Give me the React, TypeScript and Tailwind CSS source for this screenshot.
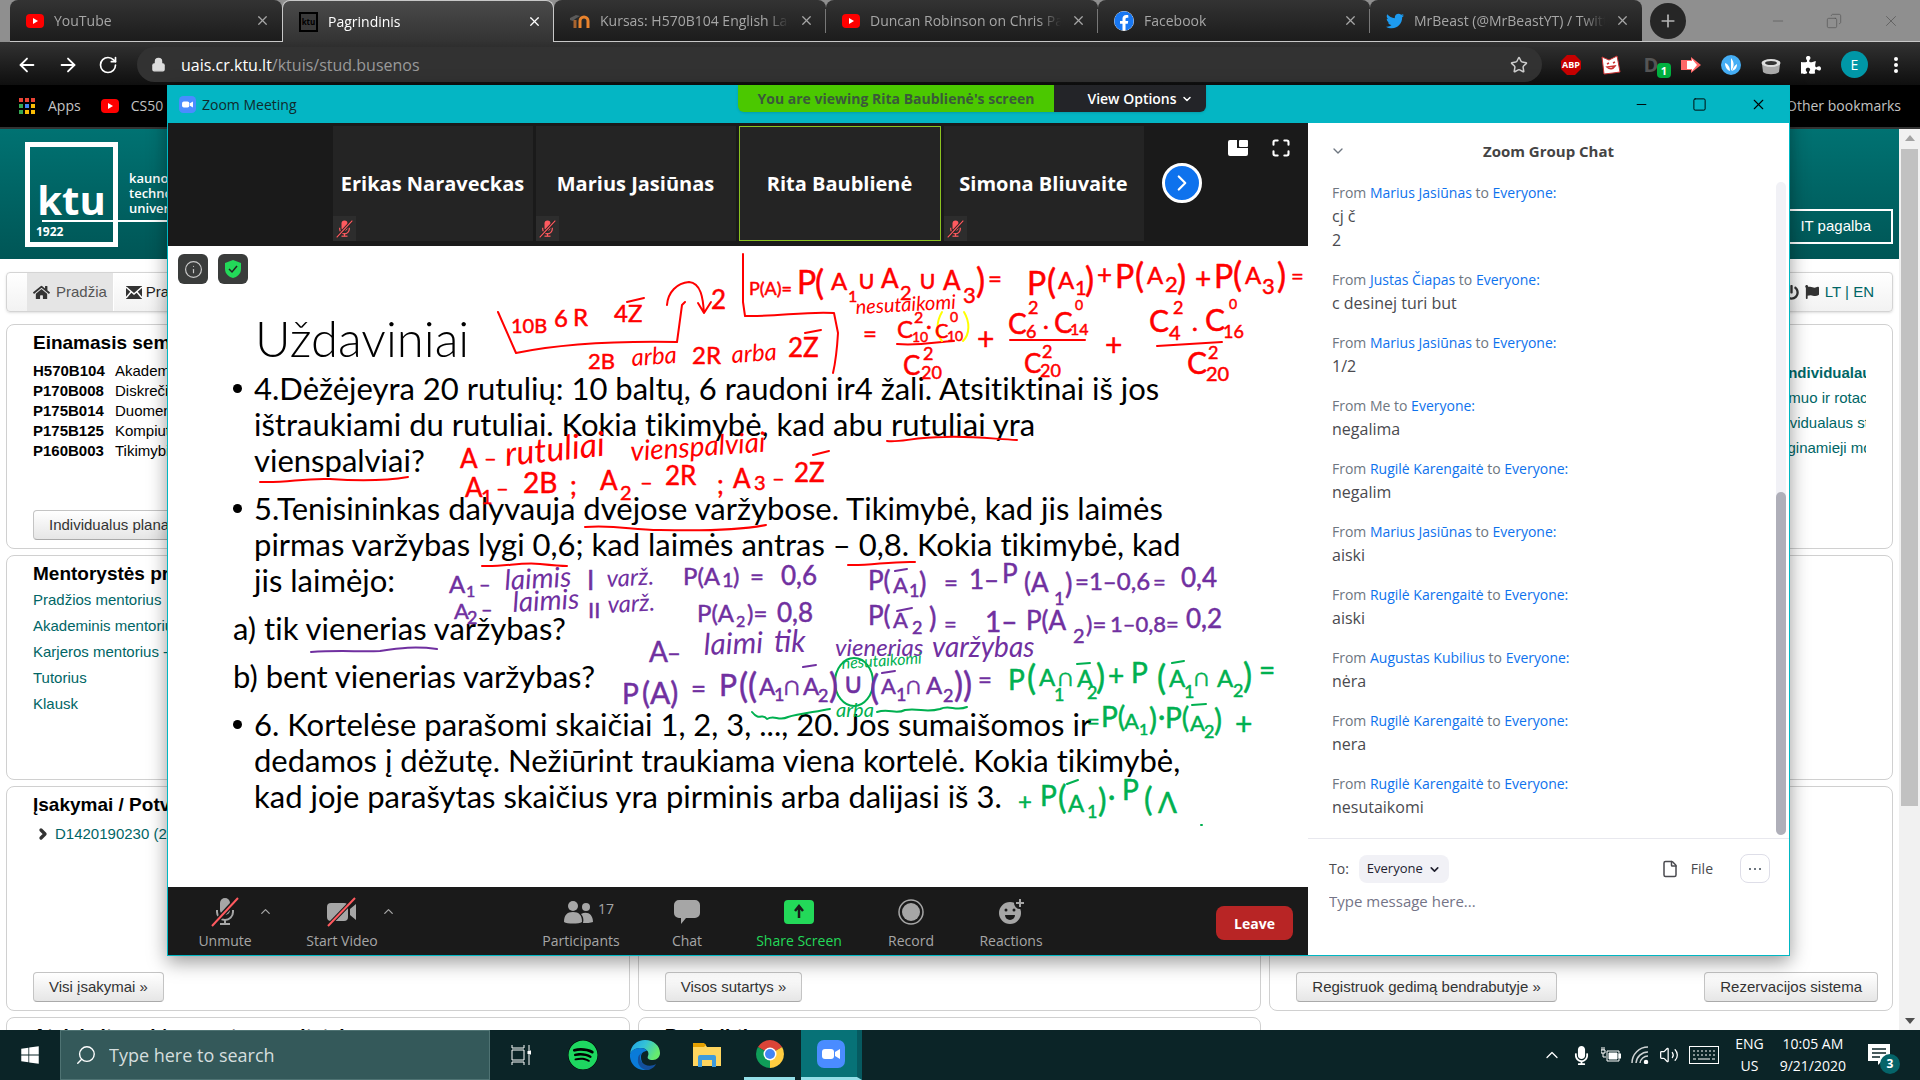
import type { ReactNode } from "react";
import {
  ArrowLeft,
  ArrowRight,
  RotateCw,
  Lock,
  Star,
  Plus,
  Minus,
  X,
  Copy,
  Square,
  ChevronDown,
  ChevronUp,
  ChevronRight,
  Info,
  Maximize,
  File,
  Search,
  Volume2,
} from "lucide-react";
import {
  FaHome,
  FaFlag,
  FaSpotify,
  FaTwitter,
  FaFacebook,
  FaPuzzlePiece,
  FaWindows,
  FaPowerOff,
  FaMicrophone,
} from "react-icons/fa";

const UI = "font-['Open_Sans','Noto_Sans',sans-serif]";
const WEB = "font-['Liberation_Sans',Arial,sans-serif]";

/* ---------- small icons ---------- */

function YouTubeIcon() {
  return (
    <svg viewBox="0 0 18 14" className="h-[14px] w-[18px] shrink-0">
      <rect width="18" height="14" rx="4" fill="#f00" />
      <path d="M7 4l5 3-5 3z" fill="#fff" />
    </svg>
  );
}

function MoodleIcon() {
  return (
    <svg viewBox="0 0 20 14" className="h-[14px] w-[20px] shrink-0">
      <path d="M0 4l6-3 4 1-5 3-2 2-3-1z" fill="#5a5a5a" />
      <path d="M5 6v8" stroke="#a8642f" strokeWidth="3" />
      <path d="M10 14V7a4 4 0 0 1 8 0v7" fill="none" stroke="#e9832d" strokeWidth="3" />
    </svg>
  );
}

function KtuIcon() {
  return (
    <span className="flex h-[20px] w-[19px] shrink-0 items-center justify-center border-2 border-black bg-[#3a3a3a] text-[8px] font-bold text-black">
      ktu
    </span>
  );
}

function ZoomIcon({ size }: { size: "s" | "l" }) {
  return (
    <svg viewBox="0 0 28 28" className={size === "s" ? "size-[17px] shrink-0" : "size-[28px] shrink-0"}>
      <rect width="28" height="28" rx="7" fill="#4a8cff" />
      <rect x="5" y="9" width="12" height="10" rx="3" fill="#fff" />
      <path d="M18 12l5-3v10l-5-3z" fill="#fff" />
    </svg>
  );
}

function MutedMic({ small = false }: { small?: boolean }) {
  return (
    <svg viewBox="0 0 28 30" className={small ? "h-[18px] w-[17px]" : "h-[30px] w-[28px]"}>
      <g fill={small ? "#ff5a5f" : "#a6a6a6"} stroke="none">
        <rect x="9" y="1" width="10" height="17" rx="5" />
        <rect x="9" y="26" width="10" height="2" />
        <rect x="13" y="22" width="2" height="5" />
      </g>
      <path d="M6 13v2a8 8 0 0 0 16 0v-2" fill="none" stroke={small ? "#ff5a5f" : "#a6a6a6"} strokeWidth="2" />
      <path d="M1 29L27 1" stroke={small ? "#242424" : "#1a1a1a"} strokeWidth="5" />
      <path d="M1 29L27 1" stroke="#ff5a5f" strokeWidth="2" />
    </svg>
  );
}

function MutedCamera() {
  return (
    <svg viewBox="0 0 34 30" className="h-[30px] w-[34px]">
      <rect x="2" y="6" width="21" height="18" rx="4" fill="#a6a6a6" />
      <path d="M25 12l6-5v16l-6-5z" fill="#a6a6a6" />
      <path d="M3 29L30 1" stroke="#1a1a1a" strokeWidth="4" />
      <path d="M3 29L30 1" stroke="#ff5a5f" strokeWidth="2" />
    </svg>
  );
}

/* ---------- browser ---------- */

type TabInfo = { icon: ReactNode; title: string; active?: boolean; sep?: boolean };

const tabs: TabInfo[] = [
  { icon: <YouTubeIcon />, title: "YouTube" },
  { icon: <KtuIcon />, title: "Pagrindinis", active: true },
  { icon: <MoodleIcon />, title: "Kursas: H570B104 English Language", sep: true },
  { icon: <YouTubeIcon />, title: "Duncan Robinson on Chris Paul", sep: true },
  { icon: <FaFacebook className="size-[20px] shrink-0 rounded-full bg-white text-[#1877f2]" />, title: "Facebook", sep: true },
  { icon: <FaTwitter className="size-[18px] shrink-0 text-[#1d9bf0]" />, title: "MrBeast (@MrBeastYT) / Twitter" },
];

function Tab({ icon, title, active, sep }: TabInfo) {
  return (
    <div
      className={
        active
          ? "flex w-[272px] items-center gap-2.5 rounded-t-lg border border-b-0 border-[#c8c8c8] bg-gradient-to-b from-[#4a4a4a] to-[#333] pl-4 pr-[11px] text-white"
          : "flex w-[272px] items-center gap-2.5 rounded-t-lg border-b border-[#c8c8c8] bg-gradient-to-b from-[#333] to-[#1c1c1c] pl-4 text-[#a6a6a6]"
      }
    >
      {icon}
      <span className="min-w-0 flex-1 overflow-hidden whitespace-nowrap text-sm [mask-image:linear-gradient(to_right,#000_88%,transparent)]">
        {title}
      </span>
      <div className={active ? "flex items-center" : "flex w-[27px] items-center justify-between"}>
        <button aria-label={`Close ${title}`}>
          <X className="size-[15px]" />
        </button>
        {sep && <span className="h-[24px] w-px bg-[#777]" />}
      </div>
    </div>
  );
}

function Browser() {
  return (
    <header className={`${UI} flex flex-col`}>
      <div className="flex h-[42px] bg-[#8f8f8f] pl-2.5">
        {tabs.map((t) => (
          <Tab key={t.title} {...t} />
        ))}
        <div className="flex flex-1 items-center border-b border-[#c8c8c8] pl-2">
          <button aria-label="New tab" className="flex size-[36px] items-center justify-center rounded-full bg-[#262626] text-[#b5b5b5]">
            <Plus className="size-[20px]" />
          </button>
          <div className="ml-auto flex items-center gap-10 pr-5 text-[#555]">
            <Minus className="size-[16px]" strokeWidth={1} />
            <Copy className="size-[16px] -scale-x-100" strokeWidth={1} />
            <X className="size-[18px]" strokeWidth={1} />
          </div>
        </div>
      </div>
      <div className="flex h-[43px] items-center gap-[19px] bg-gradient-to-b from-[#323232] to-[#0f0f0f] pl-4 pr-4 pt-0.5 text-white">
        <button aria-label="Back">
          <ArrowLeft className="size-[22px]" />
        </button>
        <button aria-label="Forward">
          <ArrowRight className="size-[22px]" />
        </button>
        <button aria-label="Reload">
          <RotateCw className="size-[20px]" />
        </button>
        <div className="flex h-[35px] flex-1 items-center gap-[15px] rounded-full bg-[#323232] px-3.5">
          <Lock className="size-[15px] fill-[#ddd] text-[#ddd]" />
          <p className="flex-1 text-[16px] text-[#9a9a9a]">
            <span className="text-white">uais.cr.ktu.lt</span>/ktuis/stud.busenos
          </p>
          <Star className="size-[18px] text-[#ccc]" />
        </div>
        <div className="flex items-center gap-5">
          <svg viewBox="0 0 20 20" className="size-[20px]">
            <path d="M6 0h8l6 6v8l-6 6H6l-6-6V6z" fill="#c70000" />
            <text x="10" y="13" textAnchor="middle" fontSize="9" fontWeight="700" fill="#fff">
              ABP
            </text>
          </svg>
          <svg viewBox="0 0 20 20" className="size-[20px]">
            <path d="M1 2l7 3 8-4 1 5 2 11-7 1-9 1z" fill="#fff" stroke="#c33" />
            <path d="M6 9l2-1M12 8l2-1M6 12c3 3 6 2 8-1z" fill="none" stroke="#c33" strokeWidth="1.5" />
          </svg>
          <span className="relative flex size-[20px] items-center justify-center text-[20px] font-bold text-[#555]">
            D
            <span className="absolute -right-2.5 top-2 rounded-sm bg-[#00b140] px-1 text-[11px] leading-[15px] text-white">1</span>
          </span>
          <svg viewBox="0 0 20 20" className="size-[20px]">
            <path d="M0 5h10V2l10 8-10 8v-3H0z" fill="#f66" />
            <path d="M6 6h5V4l5 6-5 6v-2H6z" fill="#fff" />
          </svg>
          <svg viewBox="0 0 20 20" className="size-[20px]">
            <circle cx="10" cy="10" r="10" fill="#45aef5" />
            <path d="M4 8c3 1 5 4 5 8-3-1-5-4-5-8zM10 16V3c4 5 3 9 0 13zM16 9c0 4-2 6-5 7 1-3 2-5 5-7z" fill="#fff" />
          </svg>
          <svg viewBox="0 0 20 20" className="size-[20px]">
            <path d="M1 9h18l-1 8c-3 3-13 3-16 0z" fill="#aaa" />
            <ellipse cx="10" cy="8" rx="9.5" ry="4" fill="#ddd" />
            <ellipse cx="10" cy="8" rx="6" ry="2" fill="#333" />
          </svg>
          <FaPuzzlePiece className="size-[20px]" />
          <span className="flex size-[27px] items-center justify-center rounded-full bg-[#0097a7] text-sm">E</span>
          <svg viewBox="0 0 16 20" className="h-[20px] w-[16px] fill-white">
            <circle cx="8" cy="4" r="2" />
            <circle cx="8" cy="10" r="2" />
            <circle cx="8" cy="16" r="2" />
          </svg>
        </div>
      </div>
      <div className="flex h-[44px] items-center border-b-2 border-[#333] bg-black px-[19px] text-sm text-[#c4c4c4]">
        <svg viewBox="0 0 17 17" className="size-[17px]">
          <path d="M0 0h4v4H0zM6 0h4v4H6zM12 0h4v4h-4z" fill="#ea4335" />
          <path d="M0 6h4v4H0zM0 12h4v4H0z" fill="#34a853" />
          <path d="M6 6h4v4H6z" fill="#4285f4" />
          <path d="M12 6h4v4h-4zM6 12h4v4H6zM12 12h4v4h-4z" fill="#fbbc05" />
        </svg>
        <a href="#apps" className="ml-3">
          Apps
        </a>
        <a href="#cs50" className="ml-5 flex items-center gap-3">
          <YouTubeIcon />
          CS50
        </a>
        <a href="#other" className="ml-auto">
          Other bookmarks
        </a>
      </div>
    </header>
  );
}

/* ---------- university page ---------- */

function Card({ children, flat = false }: { children?: ReactNode; flat?: boolean }) {
  return (
    <section
      className={
        flat
          ? "h-[40px] overflow-hidden rounded-lg border border-[#d0d0d0] bg-white pl-[26px] pt-1.5"
          : "flex min-h-[225px] flex-col rounded-lg border border-[#d0d0d0] bg-white px-[26px] pb-2 pt-1.5"
      }
    >
      {children}
    </section>
  );
}

function PageButton({ children }: { children: ReactNode }) {
  return (
    <button className="h-[30px] whitespace-nowrap rounded border border-[#c4c4c4] border-b-[#aaa] bg-gradient-to-b from-white to-[#e6e6e6] px-[15px] text-[15px] text-[#333]">
      {children}
    </button>
  );
}

const subjects = [
  ["H570B104", "Akademinė anglų kalba"],
  ["P170B008", "Diskrečiosios struktūros"],
  ["P175B014", "Duomenų struktūros"],
  ["P175B125", "Kompiuterių architektūra"],
  ["P160B003", "Tikimybių teorija"],
];

const mentorLinks = ["Pradžios mentorius", "Akademinis mentorius", "Karjeros mentorius -", "Tutorius", "Klausk"];

function Title({ children }: { children: ReactNode }) {
  return <h2 className="whitespace-nowrap text-[19px] font-bold leading-6 text-black">{children}</h2>;
}

function University() {
  return (
    <div className={`${WEB} flex min-h-0 flex-1 overflow-hidden bg-white`}>
      <main className="min-w-0 flex-1">
        <div className="flex h-[130px] items-start justify-between bg-gradient-to-b from-[#007272] to-[#005656] px-1.5 text-white">
          <div className="flex pl-[19px] pt-[13px]">
            <div className="flex h-[105px] w-[93px] flex-col justify-end border-[5px] border-white px-1.5 font-['Open_Sans',sans-serif] font-bold">
              <span className="text-center text-[40px] leading-[40px]">ktu</span>
              <span className="-mr-[60px] ml-1.5 border-b-2 border-white" />
              <span className="text-[12px] leading-5">1922</span>
            </div>
            <p className="ml-[11px] mt-[29px] font-['Open_Sans',sans-serif] text-[13px] font-semibold leading-[15px]">
              kauno
              <br />
              technologijos
              <br />
              universitetas
            </p>
          </div>
          <a href="#help" className="mt-[80px] flex h-[35px] w-[160px] items-center justify-end border-2 border-white pr-5 text-[15px]">
            IT pagalba
          </a>
        </div>
        <div className="flex flex-col gap-3 px-1.5 pt-[13px]">
          <nav className="flex h-[40px] items-stretch rounded border border-[#d4d4d4] bg-gradient-to-b from-white to-[#f2f2f2] pl-5 text-[15px] text-[#222] shadow-sm">
            <a href="#home" className="flex items-center gap-1.5 border-r border-white bg-[#e5e5e5] px-1.5 text-[#555]">
              <FaHome className="size-[17px] text-[#333]" />
              Pradžia
            </a>
            <a href="#messages" className="ml-3 flex items-center gap-1">
              <svg viewBox="0 0 16 13" className="h-[13px] w-[16px]">
                <path d="M0 0h16v13H0z" fill="#333" />
                <path d="M0 1l8 7 8-7M0 12l5-6M16 12l-5-6" fill="none" stroke="#fff" strokeWidth="1.5" />
              </svg>
              Pranešimai
            </a>
            <span className="ml-auto flex items-center gap-1.5 pr-[18px] text-[#006666]">
              <FaPowerOff className="size-[15px] text-[#333]" />
              <FaFlag className="size-[14px] text-[#333]" />
              <span>
                <a href="#lt">LT</a> | <a href="#en">EN</a>
              </span>
            </span>
          </nav>
          <div className="grid grid-cols-3 gap-x-2 gap-y-1.5">
            <Card>
              <Title>Einamasis semestras</Title>
              <table className="mt-1.5 text-[15px] leading-5">
                <tbody>
                  {subjects.map(([code, name]) => (
                    <tr key={code} className="text-black">
                      <th className="w-[82px] text-left font-bold">{code}</th>
                      <td>{name}</td>
                    </tr>
                  ))}
                </tbody>
              </table>
              <div className="mt-auto">
                <PageButton>Individualus planas</PageButton>
              </div>
            </Card>
            <Card />
            <Card>
              <div className="ml-auto mt-[29px] flex w-[180px] flex-col overflow-hidden whitespace-nowrap pl-[86px] text-[15px] leading-[25px] text-[#006666]">
                <a href="#n1" className="pl-3 font-bold">individualaus</a>
                <a href="#n2" className="pl-2">gmuo ir rotacija</a>
                <a href="#n3" className="pl-1.5">dividualaus studijų</a>
                <a href="#n4" className="pl-2">yginamieji moduliai</a>
              </div>
            </Card>
            <Card>
              <Title>Mentorystės programa</Title>
              <ul className="mt-px text-[15px] leading-[26px] text-[#006666]">
                {mentorLinks.map((l) => (
                  <li key={l}>
                    <a href="#mentor">{l}</a>
                  </li>
                ))}
              </ul>
            </Card>
            <Card />
            <Card />
            <Card>
              <Title>Įsakymai / Potvarkiai</Title>
              <a href="#order" className="mt-1.5 flex items-center gap-1 pl-0.5 text-[15px] text-[#006666]">
                <ChevronRight className="size-[16px] text-[#333]" strokeWidth={5} />
                D1420190230 (2020-09-01)
              </a>
              <div className="mt-auto">
                <PageButton>Visi įsakymai »</PageButton>
              </div>
            </Card>
            <Card>
              <div className="mt-auto">
                <PageButton>Visos sutartys »</PageButton>
              </div>
            </Card>
            <Card>
              <div className="-mr-3 mt-auto flex justify-between">
                <PageButton>Registruok gedimą bendrabutyje »</PageButton>
                <PageButton>Rezervacijos sistema</PageButton>
              </div>
            </Card>
            <Card flat>
              <Title>Atsiskaitymai / semestro rezultatai</Title>
            </Card>
            <Card flat>
              <Title>Paskelbti</Title>
            </Card>
          </div>
        </div>
      </main>
      <div className="flex w-[21px] flex-col items-center justify-between bg-[#f1f1f1] py-1.5">
        <span className="border-x-[5px] border-b-[6px] border-x-transparent border-b-[#a3a3a3]" />
        <span className="mb-auto mt-2 h-[657px] w-[17px] bg-[#c1c1c1]" />
        <span className="border-x-[5px] border-t-[6px] border-x-transparent border-t-[#505050]" />
      </div>
    </div>
  );
}

/* ---------- shared slide and ink ---------- */

type Note = [x: number, y: number, text: string, size: number, tilt?: number];

const redNotes: Note[] = [
  [511, 333, "10B", 20], [554, 327, "6", 24], [573, 326, "R", 24], [614, 322, "4Z", 24], [711, 309, "2", 26],
  [588, 369, "2B", 22], [692, 364, "2R", 24], [788, 357, "2Z", 26],
  [749, 295, "P(A)=", 18], [797, 294, "P", 32], [815, 295, "(", 34], [831, 290, "A", 24], [848, 302, "1", 16], [857, 289, "∪", 26],
  [881, 288, "A", 26], [900, 300, "2", 20], [918, 289, "∪", 26], [943, 290, "A", 26], [963, 303, "3", 22], [976, 293, ")", 34], [988, 287, "=", 24],
  [1027, 295, "P", 32], [1047, 294, "(", 34], [1058, 289, "A", 24], [1075, 295, "1", 20], [1085, 292, ")", 34], [1097, 284, "+", 26],
  [1115, 288, "P", 32], [1135, 288, "(", 34], [1147, 284, "A", 24], [1165, 292, "2", 22], [1177, 290, ")", 34], [1195, 289, "+", 28],
  [1214, 288, "P", 32], [1233, 287, "(", 34], [1245, 284, "A", 24], [1262, 294, "3", 22], [1277, 288, ")", 34], [1291, 284, "=", 22],
  [863, 342, "=", 24],
  [897, 338, "C", 24], [914, 323, "2", 16], [912, 342, "10", 14], [926, 334, "·", 22], [935, 338, "C", 20], [947, 341, "10", 14], [950, 322, "0", 14],
  [903, 375, "C", 26], [923, 360, "2", 18], [921, 379, "20", 18], [977, 350, "+", 30],
  [1008, 334, "C", 28], [1028, 314, "2", 18], [1026, 338, "6", 18], [1043, 334, "·", 22], [1054, 333, "C", 28], [1075, 310, "0", 14], [1070, 335, "14", 16],
  [1024, 373, "C", 26], [1042, 358, "2", 18], [1040, 377, "20", 18], [1105, 356, "+", 30],
  [1149, 332, "C", 30], [1173, 314, "2", 18], [1169, 340, "4", 20], [1192, 336, "·", 22], [1205, 331, "C", 30], [1229, 309, "0", 14], [1223, 338, "16", 18],
  [1187, 374, "C", 30], [1208, 359, "2", 18], [1206, 381, "20", 20],
  [460, 468, "A", 26], [484, 466, "–", 22], [465, 497, "A", 26], [481, 504, "1", 20], [496, 496, "–", 22], [523, 493, "2B", 28], [570, 495, ";", 26],
  [600, 490, "A", 26], [620, 500, "2", 20], [640, 490, "–", 22], [665, 485, "2R", 26], [717, 494, ";", 26], [733, 488, "A", 26], [754, 490, "3", 20], [772, 486, "–", 22], [794, 482, "2Z", 26],
];

const redScript: Note[] = [
  [632, 366, "arba", 24, -4], [732, 363, "arba", 24, -4], [856, 314, "nesutaikomi", 20, -3], [506, 466, "rutuliai", 34, -6], [631, 461, "vienspalviai", 28, -4],
];

const purpleNotes: Note[] = [
  [449, 593, "A", 24], [466, 597, "1", 16], [479, 591, "–", 20], [454, 619, "A", 22], [467, 624, "2", 18], [481, 616, "–", 20], [587, 590, "I", 26], [588, 618, "II", 22],
  [683, 585, "P(A", 24], [722, 587, "1", 20], [733, 585, ")", 24], [750, 585, "=", 24], [781, 585, "0,6", 26],
  [697, 622, "P(A", 24], [736, 627, "2", 16], [747, 622, ")=", 24], [777, 622, "0,8", 26],
  [868, 590, "P(", 26], [893, 593, "A", 22], [909, 597, "1", 18], [919, 593, ")", 28], [944, 591, "=", 24], [969, 589, "1–", 26], [1002, 583, "P", 26], [1024, 592, "(A", 26],
  [1054, 605, "1", 18], [1065, 594, ")", 28], [1075, 590, "=1–0,6", 24], [1153, 590, "=", 22], [1181, 587, "0,4", 26],
  [868, 625, "P(", 26], [893, 628, "A", 22], [912, 634, "2", 18], [929, 628, ")", 28], [944, 632, "=", 22], [985, 632, "1–", 28], [1026, 630, "P(A", 26],
  [1073, 643, "2", 20], [1086, 633, ")=", 24], [1110, 632, "1–0,8=", 22], [1186, 628, "0,2", 26],
  [649, 662, "A", 28], [667, 661, "–", 24],
  [622, 704, "P", 28], [642, 704, "(A)", 30], [691, 698, "=", 26], [719, 696, "P", 30], [739, 698, "((", 34], [759, 695, "A", 24], [774, 701, "1", 18], [784, 695, "∩", 26],
  [803, 695, "A", 24], [818, 702, "2", 18], [829, 698, ")", 34], [843, 693, "∪", 28], [870, 700, "(", 34], [881, 694, "A", 22], [896, 701, "1", 18], [906, 694, "∩", 24], [926, 694, "A", 24], [943, 702, "2", 18],
  [954, 697, "))", 34], [978, 688, "=", 24],
];

const purpleScript: Note[] = [
  [505, 590, "laimis", 28, -3], [607, 587, "varž.", 24, -3], [513, 612, "laimis", 28, -3], [608, 613, "varž.", 24, -3], [704, 655, "laimi", 30, -2], [774, 652, "tik", 30],
  [835, 656, "vienerias", 24], [932, 657, "varžybas", 28],
];

const greenNotes: Note[] = [
  [1008, 690, "P", 28], [1027, 690, "(", 34], [1039, 686, "A", 24], [1054, 701, "1", 18], [1058, 686, "∩", 24], [1077, 687, "A", 24], [1087, 699, "2", 18], [1096, 689, ")", 34], [1108, 686, "+", 28],
  [1131, 683, "P", 28], [1157, 690, "(", 34], [1169, 687, "A", 24], [1184, 698, "1", 18], [1194, 686, "∩", 24], [1217, 687, "A", 24], [1233, 697, "2", 18], [1243, 688, ")", 34], [1259, 680, "=", 28],
  [1087, 729, "=", 22], [1101, 727, "P(", 28], [1124, 729, "A", 22], [1139, 735, "1", 16], [1149, 730, ")", 30], [1158, 726, "·", 28], [1165, 728, "P(", 28], [1190, 731, "A", 22], [1204, 738, "2", 18], [1214, 731, ")", 30], [1235, 735, "+", 30],
  [1018, 810, "+", 24], [1040, 806, "P", 28], [1058, 809, "(", 32], [1068, 812, "A", 24], [1087, 818, "1", 18], [1098, 812, ")", 32], [1108, 806, "·", 28], [1122, 800, "P", 28], [1144, 811, "(", 32], [1158, 813, "Λ", 28],
];

const greenScript: Note[] = [
  [842, 669, "nesutaikomi", 16, -4], [836, 717, "arba", 20],
];

function Notes({ items, color, script = false }: { items: Note[]; color: string; script?: boolean }) {
  return (
    <g fill={color} className={script ? "font-['Lato',sans-serif] italic" : "font-['Lato',sans-serif]"}>
      {items.map(([x, y, text, size, tilt]) => (
        <text
          key={`${x}-${y}`}
          x={x}
          y={y}
          fontSize={size}
          stroke={color}
          strokeWidth={script ? 0 : 0.5}
          transform={tilt ? `rotate(${tilt} ${x} ${y})` : undefined}
        >
          {text}
        </text>
      ))}
    </g>
  );
}

function Ink() {
  return (
    <svg viewBox="168 246 1140 641" className="pointer-events-none absolute left-0 top-0 h-[641px] w-[1140px]" fill="none" strokeLinecap="round" strokeLinejoin="round">
      <g stroke="#ff0000" strokeWidth="2">
        <path d="M498 312L516 353C560 344 620 341 677 342L682 305L685 302" />
        <path d="M667 305C668 292 677 283 689 282C701 283 703 298 704 313M698 303L704 313L711 302" />
        <path d="M743 254L743 302L745 316C776 317 806 311 834 313L838 333C837 350 836 360 833 373" />
        <path d="M897 344C919 346 936 342 954 341M1010 340L1085 340M1157 346L1222 342" />
        <path d="M627 302L644 298M805 333L821 330M813 455L821 453L829 451" />
        <path d="M887 441C899 443 914 437 944 437C974 436 994 439 1017 440" />
        <path d="M260 482C290 483 300 478 330 479C360 481 390 480 408 477" />
        <path d="M585 527C620 525 630 530 660 530C700 531 740 530 766 525" />
        <path d="M482 566C505 567 520 562 540 564C550 565 560 566 567 566" />
        <path d="M848 565C870 566 890 561 915 562" />
      </g>
      <path d="M942 312C936 322 936 334 942 341M964 312C970 322 970 334 963 341" stroke="#ffff00" strokeWidth="2" />
      <g stroke="#7030a0" strokeWidth="2">
        <path d="M311 652C340 650 360 652 380 651C400 648 415 646 437 649" />
        <path d="M895 571L907 569M897 611L912 608M803 667L816 665M882 673L895 671" />
      </g>
      <g stroke="#00b050" strokeWidth="2">
        <ellipse cx="854" cy="682" rx="19" ry="24" />
        <path d="M752 712C760 722 762 712 767 719C775 714 778 722 788 717C798 714 815 712 830 709" />
        <path d="M877 712C890 708 895 715 905 710C920 708 925 713 940 709C950 704 955 712 967 707" />
        <path d="M1077 664L1090 663M1172 663L1184 661M1192 705L1206 704M1067 784L1078 780M1201 825h1" />
      </g>
      <Notes items={redNotes} color="#ff0000" />
      <Notes items={redScript} color="#ff0000" script />
      <Notes items={purpleNotes} color="#7030a0" />
      <Notes items={purpleScript} color="#7030a0" script />
      <Notes items={greenNotes} color="#00b050" />
      <Notes items={greenScript} color="#00b050" script />
    </svg>
  );
}

function Bullet({ lines }: { lines: string[] }) {
  return (
    <li className="flex gap-3">
      <span className="mt-[14px] size-[9px] shrink-0 rounded-full bg-black" />
      <p>
        {lines.map((l) => (
          <span key={l} className="block">
            {l}
          </span>
        ))}
      </p>
    </li>
  );
}

function Slide() {
  return (
    <div className="relative flex-1 overflow-hidden bg-white text-black">
      <div className="absolute left-[10px] top-[8px] flex gap-2.5">
        <button aria-label="Meeting information" className="flex size-[30px] items-center justify-center rounded-md bg-[#3a3c3b] text-[#c8c8c8]">
          <Info className="size-[19px]" strokeWidth={1.5} />
        </button>
        <button aria-label="Encryption" className="flex size-[30px] items-center justify-center rounded-md bg-[#3a3c3b]">
          <svg viewBox="0 0 16 18" className="h-[18px] w-[16px]">
            <path d="M8 0l8 3v6c0 5-4 8-8 9-4-1-8-4-8-9V3z" fill="#23d959" />
            <path d="M4 9l3 3 5-6" fill="none" stroke="#222" strokeWidth="1.5" />
          </svg>
        </button>
      </div>
      <div className="whitespace-nowrap pl-[65px] pt-[60px] font-['Lato',sans-serif] [font-variant-ligatures:none]">
        <h1 className="pl-[22px] text-[49px] font-light leading-[64px]">Uždaviniai</h1>
        <ul className="flex flex-col gap-3 text-[31px] leading-[36px]">
          <Bullet
            lines={[
              "4.Dėžėjeyra 20 rutulių: 10 baltų, 6 raudoni ir4 žali. Atsitiktinai iš jos",
              "ištraukiami du rutuliai. Kokia tikimybė, kad abu rutuliai yra",
              "vienspalviai?",
            ]}
          />
          <Bullet
            lines={[
              "5.Tenisininkas dalyvauja dvejose varžybose. Tikimybė, kad jis laimės",
              "pirmas varžybas lygi 0,6; kad laimės antras – 0,8. Kokia tikimybė, kad",
              "jis laimėjo:",
            ]}
          />
          <li>a) tik vienerias varžybas?</li>
          <li>b) bent vienerias varžybas?</li>
          <Bullet
            lines={[
              "6. Kortelėse parašomi skaičiai 1, 2, 3, ..., 20. Jos sumaišomos ir",
              "dedamos į dėžutę. Nežiūrint traukiama viena kortelė. Kokia tikimybė,",
              "kad joje parašytas skaičius yra pirminis arba dalijasi iš 3.",
            ]}
          />
        </ul>
      </div>
      <Ink />
    </div>
  );
}

/* ---------- zoom window ---------- */

function Tile({ name, muted = true, speaking = false }: { name: string; muted?: boolean; speaking?: boolean }) {
  return (
    <div
      className={
        speaking
          ? "relative flex w-[202px] items-center justify-center border border-[#8bc220] bg-[#242424]"
          : "relative flex w-[200px] items-center justify-center bg-[#242424]"
      }
    >
      {name}
      {muted && (
        <span className="absolute bottom-0 left-0 flex h-[25px] w-[23px] items-center justify-center bg-[#2d2d2d]">
          <MutedMic small />
        </span>
      )}
    </div>
  );
}

function Gallery() {
  return (
    <div className="relative flex h-[123px] justify-center gap-[3px] bg-[#1a1a1a] pb-[5px] pt-[3px] text-[20px] font-bold text-white">
      <Tile name="Erikas Naraveckas" />
      <Tile name="Marius Jasiūnas" />
      <Tile name="Rita Baublienė" muted={false} speaking />
      <Tile name="Simona Bliuvaite" />
      <button
        aria-label="Next participants"
        className="absolute right-[106px] top-[40px] flex size-[40px] items-center justify-center rounded-full border-[3px] border-white bg-[#0e72ed]"
      >
        <ChevronRight className="size-[26px]" strokeWidth={2} />
      </button>
      <div className="absolute right-[17px] top-[15px] flex items-center gap-[23px]">
        <svg viewBox="0 0 20 16" className="h-[16px] w-[20px]">
          <path d="M2 0h7v8h11v6a2 2 0 0 1-2 2H2a2 2 0 0 1-2-2V2a2 2 0 0 1 2-2z" fill="#fff" />
          <rect x="11" y="0" width="9" height="7" rx="1" fill="#fff" />
        </svg>
        <Maximize className="size-[20px]" strokeWidth={2.5} />
      </div>
    </div>
  );
}

function Tool({ icon, label, className }: { icon: ReactNode; label: string; className: string }) {
  return (
    <button className={`flex flex-col items-center ${className}`}>
      <span className="flex h-[36px] items-center">{icon}</span>
      <span className="text-[14px] leading-[22px]">{label}</span>
    </button>
  );
}

function Toolbar() {
  return (
    <div className="flex h-[68px] items-start bg-[#1a1a1a] pl-[20px] pr-[15px] pt-[7px] text-[#a6a6a6]">
      <Tool className="w-[74px]" label="Unmute" icon={<MutedMic />} />
      <ChevronUp className="-ml-[4px] mt-[10px] size-[15px]" />
      <Tool className="ml-[26px] w-[86px]" label="Start Video" icon={<MutedCamera />} />
      <ChevronUp className="-ml-[4px] mt-[10px] size-[15px]" />
      <div className="flex flex-1 justify-center gap-3 pr-[26px]">
        <Tool
          className="w-[96px]"
          label="Participants"
          icon={
            <span className="flex items-start gap-1 pl-4 text-[14px] leading-[18px]">
              <svg viewBox="0 0 30 24" className="h-[24px] w-[30px]" fill="#a6a6a6">
                <circle cx="9" cy="6" r="5" />
                <circle cx="22" cy="7" r="4" />
                <path d="M0 22c0-7 3-10 9-10s9 3 9 10c-3 2-15 2-18 0zM19 23c1-4 0-7-2-9 6-3 12 0 12 8-2 1-7 1-10 1z" />
              </svg>
              17
            </span>
          }
        />
        <Tool
          className="w-[92px]"
          label="Chat"
          icon={
            <svg viewBox="0 0 26 24" className="h-[24px] w-[26px]" fill="#a6a6a6">
              <path d="M5 0h16a5 5 0 0 1 5 5v8a5 5 0 0 1-5 5h-9l-5 6v-6H5a5 5 0 0 1-5-5V5a5 5 0 0 1 5-5z" />
            </svg>
          }
        />
        <Tool
          className="w-[108px] text-[#23d959]"
          label="Share Screen"
          icon={
            <svg viewBox="0 0 30 24" className="h-[24px] w-[30px]">
              <rect width="30" height="24" rx="4" fill="#23d959" />
              <path d="M15 18V7M11 11l4-5 4 5" fill="none" stroke="#1a1a1a" strokeWidth="2.5" />
            </svg>
          }
        />
        <Tool
          className="w-[92px]"
          label="Record"
          icon={
            <svg viewBox="0 0 26 26" className="size-[26px]">
              <circle cx="13" cy="13" r="12" fill="none" stroke="#a6a6a6" strokeWidth="1.5" />
              <circle cx="13" cy="13" r="9" fill="#a6a6a6" />
            </svg>
          }
        />
        <Tool
          className="w-[84px]"
          label="Reactions"
          icon={
            <svg viewBox="0 0 28 28" className="size-[28px]">
              <circle cx="13" cy="15" r="11" fill="#a6a6a6" />
              <path d="M8 17a5 5 0 0 0 10 0z" fill="#1a1a1a" />
              <circle cx="9" cy="12" r="1.5" fill="#1a1a1a" />
              <circle cx="17" cy="12" r="1.5" fill="#1a1a1a" />
              <circle cx="23" cy="5" r="6" fill="#1a1a1a" />
              <path d="M23 1v8M19 5h8" stroke="#a6a6a6" strokeWidth="2" />
            </svg>
          }
        />
      </div>
      <button className="mt-3 h-[34px] w-[77px] rounded-lg bg-[#b82525] text-[14px] font-bold text-white">Leave</button>
    </div>
  );
}

type Message = { from: string; text: string[]; me?: boolean };

const messages: Message[] = [
  { from: "Marius Jasiūnas", text: ["cj č", "2"] },
  { from: "Justas Čiapas", text: ["c desinej turi but"] },
  { from: "Marius Jasiūnas", text: ["1/2"] },
  { from: "Me", text: ["negalima"], me: true },
  { from: "Rugilė Karengaitė", text: ["negalim"] },
  { from: "Marius Jasiūnas", text: ["aiski"] },
  { from: "Rugilė Karengaitė", text: ["aiski"] },
  { from: "Augustas Kubilius", text: ["nėra"] },
  { from: "Rugilė Karengaitė", text: ["nera"] },
  { from: "Rugilė Karengaitė", text: ["nesutaikomi"] },
];

function Chat() {
  return (
    <aside className="flex w-[481px] flex-col bg-white">
      <div className="flex h-[56px] items-center pl-[22px]">
        <button aria-label="Collapse chat">
          <ChevronDown className="size-[16px] text-[#6e7680]" />
        </button>
        <h2 className="flex-1 pr-[38px] text-center text-[15px] font-bold text-[#444]">Zoom Group Chat</h2>
      </div>
      <div className="flex min-h-0 flex-1 justify-between border-b border-[#e8e8ee] pb-[3px] pl-[24px] pr-[3px] pt-[3px]">
        <ol className="flex flex-col gap-[17px]">
          {messages.map((m, i) => (
            <li key={i} className="text-[16px] leading-6 text-[#4a4a4f]">
              <p className="text-[14px] leading-[22px] text-[#6e7680]">
                From <span className={m.me ? "" : "text-[#0e72ed]"}>{m.from}</span> to <span className="text-[#0e72ed]">Everyone:</span>
              </p>
              {m.text.map((t) => (
                <p key={t}>{t}</p>
              ))}
            </li>
          ))}
        </ol>
        <div className="flex w-[10px] flex-col justify-end rounded-full bg-[#f1f1f6]">
          <span className="h-[343px] rounded-full bg-[#afafb9]" />
        </div>
      </div>
      <div className="flex h-[116px] flex-col gap-1.5 pl-[21px] pr-[19px] pt-[15px]">
        <div className="flex items-center text-[14px] text-[#4a4a4f]">
          <label htmlFor="to">To:</label>
          <span className="relative ml-[10px]">
            <select id="to" className="h-[28px] w-[90px] appearance-none rounded-lg bg-[#f1f1f6] pl-2 text-[13px] text-[#222230]">
              <option>Everyone</option>
            </select>
            <ChevronDown className="pointer-events-none absolute right-2 top-2 size-[13px] text-[#222230]" strokeWidth={3} />
          </span>
          <button className="ml-auto flex items-center gap-3">
            <File className="size-[18px]" />
            File
          </button>
          <button aria-label="More" className="ml-[27px] flex h-[29px] w-[30px] items-center justify-center gap-[3px] rounded-lg border border-[#dedee8]">
            <span className="size-[2px] bg-[#6e7680]" />
            <span className="size-[2px] bg-[#6e7680]" />
            <span className="size-[2px] bg-[#6e7680]" />
          </button>
        </div>
        <textarea
          aria-label="Message"
          placeholder="Type message here..."
          className="flex-1 resize-none text-[15px] leading-6 outline-none placeholder:text-[#747487]"
        />
      </div>
    </aside>
  );
}

function ZoomWindow() {
  return (
    <div className={`${UI} absolute bottom-[124px] left-[167px] right-[130px] top-[85px] flex flex-col border border-t-0 border-[#00b7c3] bg-[#1a1a1a] shadow-[0_6px_18px_rgba(0,0,0,0.4)]`}>
      <div className="relative flex h-[38px] items-center bg-[#04b6c4] pl-[11px] pr-[22px] text-[#102a2c]">
        <ZoomIcon size="s" />
        <span className="ml-1.5 text-[14px]">Zoom Meeting</span>
        <div className="absolute left-[570px] top-0 flex h-[27px] overflow-hidden rounded-b-md text-[14px] font-bold shadow">
          <span className="flex w-[316px] items-center justify-center bg-[#4bc800] text-[#3a5a3a]">You are viewing Rita Baublienė's screen</span>
          <button className="flex w-[152px] items-center justify-center gap-1 bg-[#232428] pl-5 font-semibold text-white">
            View Options
            <ChevronDown className="size-[12px]" strokeWidth={3} />
          </button>
        </div>
        <div className="ml-auto flex items-center gap-[43px] text-black">
          <Minus className="size-[15px]" strokeWidth={1.5} />
          <Square className="size-[15px]" strokeWidth={1.5} />
          <X className="size-[17px]" strokeWidth={1.5} />
        </div>
      </div>
      <div className="flex min-h-0 flex-1">
        <div className="flex min-w-0 flex-1 flex-col">
          <Gallery />
          <Slide />
          <Toolbar />
        </div>
        <Chat />
      </div>
    </div>
  );
}

/* ---------- taskbar ---------- */

function Taskbar() {
  return (
    <footer className={`${UI} flex h-[50px] items-stretch bg-[#0b2427] text-white`}>
      <button aria-label="Start" className="flex w-[60px] items-center justify-center">
        <FaWindows className="size-[20px]" />
      </button>
      <label className="flex w-[430px] items-center gap-3 border border-[#4f7373] bg-[#34595a] pl-[14px]">
        <Search className="size-[22px] -scale-x-100" strokeWidth={1.5} />
        <input aria-label="Search" placeholder="Type here to search" className="flex-1 bg-transparent text-[18px] outline-none placeholder:text-[#d5dede]" />
      </label>
      <div className="flex items-center">
        <button aria-label="Task view" className="flex w-[62px] items-center justify-center">
          <svg viewBox="0 0 20 20" className="size-[20px]" fill="none" stroke="#fff" strokeWidth="1">
            <path d="M1 0v3h12V0M1 20v-3h12v3M1 5h12v10H1zM18 0v5M18 10v10" />
            <path d="M17 6h3v3h-3z" fill="#fff" />
          </svg>
        </button>
        <button aria-label="Spotify" className="flex w-[62px] items-center justify-center">
          <FaSpotify className="size-[30px] rounded-full bg-black text-[#1ed760]" />
        </button>
        <button aria-label="Edge" className="flex w-[62px] items-center justify-center">
          <svg viewBox="0 0 30 30" className="size-[30px]">
            <defs>
              <linearGradient id="edgeTop" x1="0" x2="1" y1="0" y2="0.4">
                <stop offset="0" stopColor="#1da1e6" />
                <stop offset="0.5" stopColor="#34c1d8" />
                <stop offset="1" stopColor="#66eb6e" />
              </linearGradient>
            </defs>
            <path d="M0 14C1 5 7 0 15 0c9 0 15 6 15 13 0 4-3 7-7 7-5 0-6-2-5-4 2-5-3-8-7-8C6 8 2 10 0 14z" fill="url(#edgeTop)" />
            <path d="M0 14c2-5 7-6 11-6 3 0 5 1 6 3-3 0-6 2-6 6 0 6 4 11 9 12C9 33-1 25 0 14z" fill="#0a7bd8" />
            <path d="M14 12c-4 1-5 5-3 9 3 5 10 6 15 3-2 4-6 6-10 6-5-1-9-6-8-11 0-4 3-6 6-7z" fill="#14509c" />
          </svg>
        </button>
        <button aria-label="File Explorer" className="flex w-[62px] items-center justify-center">
          <svg viewBox="0 0 28 24" className="h-[24px] w-[28px]">
            <path d="M0 1h12l2 3h14v19H0z" fill="#ffd55e" />
            <path d="M0 0h11l2 2-2 2H0z" fill="#e5a000" />
            <path d="M5 14q0-2 2-2h14q2 0 2 2v10h-4v-7h-10v7H5z" fill="#3f9bdc" />
          </svg>
        </button>
        <button aria-label="Chrome" className="ml-1.5 flex h-full w-[51px] flex-col items-center border-b-[3px] border-[#94dfe8] pt-[10px]">
          <svg viewBox="0 0 28 28" className="size-[28px]">
            <path d="M14 14L1.900 7A14 14 0 0 1 26.100 7z" fill="#db4437" />
            <path d="M14 14L26.100 7A14 14 0 0 1 14 28z" fill="#ffcd40" />
            <path d="M14 14L14 28A14 14 0 0 1 1.900 7z" fill="#0f9d58" />
            <circle cx="14" cy="14" r="6.500" fill="#fff" />
            <circle cx="14" cy="14" r="5" fill="#4285f4" />
          </svg>
        </button>
        <button aria-label="Zoom" className="ml-1.5 flex h-full w-[61px] flex-col items-center border-b-[3px] border-r-[5px] border-[#94dfe8] border-r-[#065a60] bg-[#077277] pl-1 pt-[10px]">
          <ZoomIcon size="l" />
        </button>
      </div>
      <div className="ml-auto flex items-center gap-2.5 pr-[30px]">
        <ChevronUp className="size-[20px]" strokeWidth={1.5} />
        <FaMicrophone className="size-[19px]" />
        <svg viewBox="0 0 20 16" className="h-[16px] w-[20px]" fill="none" stroke="#fff">
          <path d="M6 4h12v10H6zM0 3h4v3H0zM1 3V0M3 3V0M2 6v4h3" />
          <path d="M8 6h8v6H8zM18 7h2v4h-2z" fill="#fff" />
        </svg>
        <svg viewBox="0 0 18 18" className="size-[18px]" fill="none" stroke="#fff" strokeWidth="1.5">
          <path d="M1 17A16 16 0 0 1 17 1M5 17A12 12 0 0 1 17 6M9 17a8 8 0 0 1 8-7" opacity="0.8" />
          <circle cx="15" cy="16" r="1.500" fill="#fff" />
        </svg>
        <Volume2 className="size-[20px]" strokeWidth={1.5} />
        <svg viewBox="0 0 30 18" className="h-[18px] w-[30px]" fill="none" stroke="#fff">
          <rect x="0.500" y="0.500" width="29" height="17" />
          <path d="M4 5h22M4 9h22" strokeDasharray="2 2" />
          <path d="M4 13h3M9 13h12M23 13h3" />
        </svg>
        <p className="ml-1.5 text-center text-[14px] leading-[22px]">
          ENG
          <br />
          US
        </p>
        <p className="ml-1.5 text-center text-[14px] leading-[22px]">
          10:05 AM
          <br />
          9/21/2020
        </p>
        <span className="relative ml-3 flex">
          <svg viewBox="0 0 22 22" className="size-[22px]">
            <path d="M0 0h22v17h-8l-4 4v-4H0z" fill="#fff" />
            <path d="M4 5h14M4 9h14M4 13h8" stroke="#0b2427" strokeWidth="1.500" />
          </svg>
          <span className="absolute -bottom-2 -right-2.5 flex size-[20px] items-center justify-center rounded-full bg-[#056469] text-[12px] font-bold">3</span>
        </span>
      </div>
    </footer>
  );
}

export default function App() {
  return (
    <div className="relative flex h-screen flex-col overflow-hidden bg-black">
      <Browser />
      <University />
      <Taskbar />
      <ZoomWindow />
    </div>
  );
}
